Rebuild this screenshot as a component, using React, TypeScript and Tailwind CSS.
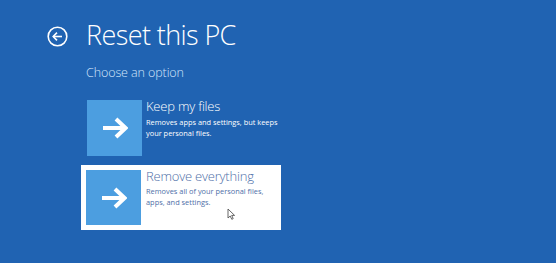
import React from "react";

function Arrow() {
  return (
    <svg width="26" height="22" viewBox="0 0 26 22" fill="none">
      <path d="M1 11 H23" stroke="white" strokeWidth="4" strokeLinecap="butt" />
      <path d="M14 2 L23.5 11 L14 20" stroke="white" strokeWidth="4" strokeLinejoin="miter" />
    </svg>
  );
}

export default function App() {
  return (
    <div
      className="w-[556px] h-[263px] bg-[#2063b2] overflow-hidden text-white"
      style={{ fontFamily: '"Open Sans", "Noto Sans", sans-serif' }}
    >
      <div className="flex items-center pl-[47px] pt-[18px]">
        <svg width="21" height="21" viewBox="0 0 21 21" fill="none" className="mt-[2px]">
          <circle cx="10.5" cy="10.5" r="9.3" stroke="white" strokeWidth="1.6" />
          <path d="M15 10.5 H6.3" stroke="white" strokeWidth="1.6" />
          <path d="M10 6.6 L6.2 10.5 L10 14.4" stroke="white" strokeWidth="1.6" />
        </svg>
        <div className="ml-[18px] text-[27px] font-light leading-[34px] tracking-[-0.6px]">Reset this PC</div>
      </div>
      <div className="pl-[86px] pt-[13px]">
        <div className="text-[12.5px] font-light leading-[16px] text-[#d4e6fb] tracking-[-0.1px]">Choose an option</div>
        <div className="mt-[19px] ml-[1px] flex">
          <div className="w-[55px] h-[56px] bg-[#4c9ee0] flex items-center justify-center">
            <Arrow />
          </div>
          <div className="ml-[4px] -mt-[2px] whitespace-nowrap">
            <div className="text-[13px] font-light leading-[16px] tracking-[-0.2px]">Keep my files</div>
            <div className="text-[7.4px] leading-[11px] mt-[3px] text-white">
              Removes apps and settings, but keeps
              <br />
              your personal files.
            </div>
          </div>
        </div>
        <div className="mt-[9px] -ml-[5px] w-[200px] h-[65px] bg-white p-[5px] flex relative">
          <div className="w-[55px] h-[55px] bg-[#4c9ee0] flex items-center justify-center shrink-0">
            <Arrow />
          </div>
          <div className="ml-[5px] -mt-[2px] whitespace-nowrap">
            <div className="text-[13px] font-light leading-[16px] text-[#4f6fa8] tracking-[-0.2px]">Remove everything</div>
            <div className="text-[7.4px] leading-[10.5px] mt-[2px] text-[#4f6fa8]">
              Removes all of your personal files,
              <br />
              apps, and settings.
            </div>
          </div>
          <svg
            width="9"
            height="12"
            viewBox="0 0 9 12"
            className="absolute left-[146px] top-[43px]"
          >
            <path d="M1 1 V10 L3.2 8 L4.8 11.3 L6.2 10.6 L4.7 7.4 H7.6 Z" fill="white" stroke="#555" strokeWidth="0.9" strokeLinejoin="round" />
          </svg>
        </div>
      </div>
    </div>
  );
}
